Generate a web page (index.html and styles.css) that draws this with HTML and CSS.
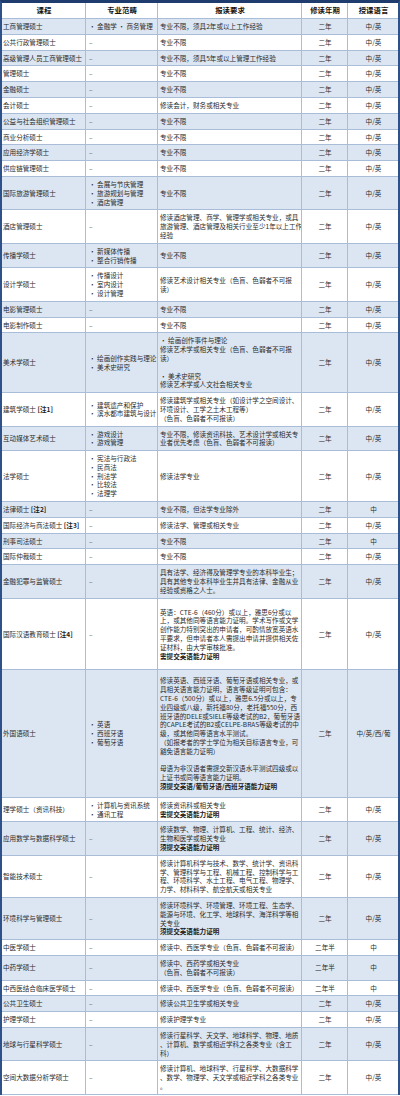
FILE: index.html
```html
<!DOCTYPE html>
<html lang="zh-CN">
<head>
<meta charset="utf-8">
<title>硕士课程</title>
<link rel="stylesheet" href="styles.css">
</head>
<body>
<table class="programs">
  <colgroup>
    <col class="c-name"><col class="c-field"><col class="c-req"><col class="c-year"><col class="c-lang">
  </colgroup>
  <thead>
    <tr><th>课程</th><th>专业范畴</th><th>报读要求</th><th>修读年期</th><th>授课语言</th></tr>
  </thead>
  <tbody>
    <tr class="alt"><td>工商管理硕士</td><td>· 金融学 · 商务管理</td><td>专业不限，须具2年或以上工作经验</td><td>二年</td><td>中/英</td></tr>
    <tr><td>公共行政管理硕士</td><td class="dash">–</td><td>专业不限</td><td>二年</td><td>中/英</td></tr>
    <tr class="alt"><td>高级管理人员工商管理硕士</td><td class="dash">–</td><td>专业不限，须具5年或以上管理工作经验</td><td>二年</td><td>中/英</td></tr>
    <tr><td>管理硕士</td><td class="dash">–</td><td>专业不限</td><td>二年</td><td>中/英</td></tr>
    <tr class="alt"><td>金融硕士</td><td class="dash">–</td><td>专业不限</td><td>二年</td><td>中/英</td></tr>
    <tr><td>会计硕士</td><td class="dash">–</td><td>修读会计，财务或相关专业</td><td>二年</td><td>中/英</td></tr>
    <tr class="alt"><td>公益与社会组织管理硕士</td><td class="dash">–</td><td>专业不限</td><td>二年</td><td>中/英</td></tr>
    <tr><td>商业分析硕士</td><td class="dash">–</td><td>专业不限</td><td>二年</td><td>中/英</td></tr>
    <tr class="alt"><td>应用经济学硕士</td><td class="dash">–</td><td>专业不限</td><td>二年</td><td>中/英</td></tr>
    <tr><td>供应链管理硕士</td><td class="dash">–</td><td>专业不限</td><td>二年</td><td>中/英</td></tr>
    <tr class="alt"><td>国际旅游管理硕士</td><td>· 会展与节庆管理<br>· 旅游规划与管理<br>· 酒店管理</td><td>专业不限</td><td>二年</td><td>中/英</td></tr>
    <tr><td>酒店管理硕士</td><td class="dash">–</td><td>修读酒店管理、商学、管理学或相关专业，或具<br>旅游管理、酒店管理及相关行业至少1年以上工作<br>经验</td><td>二年</td><td>中/英</td></tr>
    <tr class="alt"><td>传播学硕士</td><td>· 新媒体传播<br>· 整合行销传播</td><td>专业不限</td><td>二年</td><td>中/英</td></tr>
    <tr><td>设计学硕士</td><td>· 传播设计<br>· 室内设计<br>· 设计管理</td><td>修读艺术设计相关专业（色盲、色弱者不可报<br>读）</td><td>二年</td><td>中/英</td></tr>
    <tr class="alt"><td>电影管理硕士</td><td class="dash">–</td><td>专业不限</td><td>二年</td><td>中/英</td></tr>
    <tr><td>电影制作硕士</td><td class="dash">–</td><td>专业不限</td><td>二年</td><td>中/英</td></tr>
    <tr class="alt"><td>美术学硕士</td><td>· 绘画创作实践与理论<br>· 美术史研究</td><td>· 绘画创作事件与理论<br>修读艺术学或相关专业（色盲、色弱者不可报<br>读）<br><br>· 美术史研究<br>修读艺术学或人文社会相关专业</td><td>二年</td><td>中/英</td></tr>
    <tr><td>建筑学硕士 <b>[注1]</b></td><td>· 建筑遗产和保护<br>· 滨水都市建筑与设计</td><td>修读建筑学或相关专业（如设计学之空间设计、<br>环境设计、工学之土木工程等）<br>（色盲、色弱者不可报读）</td><td>二年</td><td>中/英</td></tr>
    <tr class="alt"><td>互动媒体艺术硕士</td><td>· 游戏设计<br>· 游戏管理</td><td>专业不限，修读资讯科技、艺术设计学或相关专<br>业者优先考虑（色盲、色弱者不可报读）</td><td>二年</td><td>中/英</td></tr>
    <tr><td>法学硕士</td><td>· 宪法与行政法<br>· 民商法<br>· 刑法学<br>· 比较法<br>· 法理学</td><td>修读法学专业</td><td>二年</td><td>中/英</td></tr>
    <tr class="alt"><td>法律硕士 <b>[注2]</b></td><td class="dash">–</td><td>专业不限，但法学专业除外</td><td>二年</td><td>中</td></tr>
    <tr><td>国际经济与商法硕士 <b>[注3]</b></td><td class="dash">–</td><td>修读法学、管理或相关专业</td><td>二年</td><td>中/英</td></tr>
    <tr class="alt"><td>刑事司法硕士</td><td class="dash">–</td><td>专业不限</td><td>二年</td><td>中</td></tr>
    <tr><td>国际仲裁硕士</td><td class="dash">–</td><td>专业不限</td><td>二年</td><td>中/英</td></tr>
    <tr class="alt"><td>金融犯罪与监管硕士</td><td class="dash">–</td><td>具有法学、经济得及管理学专业的本科毕业生；<br>具有其他专业本科毕业生并具有法律、金融从业<br>经验或资格之人士。</td><td>二年</td><td>中/英</td></tr>
    <tr class="roomy"><td>国际汉语教育硕士 <b>[注4]</b></td><td class="dash">–</td><td>英语：CTE-6（460分）或以上，雅思6分或以<br>上，或其他同等语言能力证明。学术写作或文学<br>创作能力特别突出的申请者，可酌情放宽英语水<br>平要求，但申请者本人需提出申请并提供相关佐<br>证材料，由大学审核批准。<br><b>需提交英语能力证明</b></td><td>二年</td><td>中/英</td></tr>
    <tr class="alt loose"><td>外国语硕士</td><td>· 英语<br>· 西班牙语<br>· 葡萄牙语</td><td>修读英语、西班牙语、葡萄牙语或相关专业，或<br>具相关语言能力证明，语言等级证明可包含：<br>CTE-6（500分）或以上，雅思6.5分或以上，专<br>业四级或八级，新托福80分，老托福550分，西<br>班牙语的DELE或SIELE等级考试的B2，葡萄牙语<br>的CAPLE考试的B2或CELPE-BRAS等级考试的中<br>级，或其他同等语言水平测试。<br>（如报考者的学士学位为相关目标语言专业，可<br>豁免语言能力证明）<br><br>母语为非汉语者需提交新汉语水平测试四级或以<br>上证书或同等语言能力证明。<br><b>须提交英语/葡萄牙语/西班牙语能力证明</b></td><td>二年</td><td>中/英/西/葡</td></tr>
    <tr><td>理学硕士（资讯科技）</td><td>· 计算机与资讯系统<br>· 通讯工程</td><td>修读资讯科或相关专业<br><b>需提交英语能力证明</b></td><td>二年</td><td>中/英</td></tr>
    <tr class="alt"><td>应用数学与数据科学硕士</td><td class="dash">–</td><td>修读数学、物理、计算机、工程、统计、经济、<br>生物和医学或相关专业<br><b>须提交英语能力证明</b></td><td>二年</td><td>中/英</td></tr>
    <tr><td>智能技术硕士</td><td class="dash">–</td><td>修读计算机科学与技术、数学、统计学、资讯科<br>学、管理科学与工程、机械工程、控制科学与工<br>程、环境科学、水土工程、电气工程、物理学、<br>力学、材料科学、航空航天或相关专业</td><td>二年</td><td>中/英</td></tr>
    <tr class="alt"><td>环境科学与管理硕士</td><td class="dash">–</td><td>修读环境科学、环境管理、环境工程、生态学、<br>能源与环境、化工学、地球科学、海洋科学等相<br>关专业<br><b>须提交英语能力证明</b></td><td>二年</td><td>中/英</td></tr>
    <tr><td>中医学硕士</td><td class="dash">–</td><td>修读中、西医学专业（色盲、色弱者不可报读）</td><td>二年半</td><td>中</td></tr>
    <tr class="alt"><td>中药学硕士</td><td class="dash">–</td><td>修读中、西药学或相关专业<br>（色盲、色弱者不可报读）</td><td>二年半</td><td>中</td></tr>
    <tr><td>中西医结合临床医学硕士</td><td class="dash">–</td><td>修读中、西医学专业（色盲、色弱者不可报读）</td><td>二年半</td><td>中</td></tr>
    <tr class="alt"><td>公共卫生硕士</td><td class="dash">–</td><td>修读公共卫生学或相关专业</td><td>二年</td><td>中/英</td></tr>
    <tr><td>护理学硕士</td><td class="dash">–</td><td>修读护理学专业</td><td>二年</td><td>中/英</td></tr>
    <tr class="alt"><td>地球与行星科学硕士</td><td class="dash">–</td><td>修读行星科学、天文学、地球科学、物理、地质<br>、计算机、数学或相近学科之各类专业（含工<br>科）</td><td>二年</td><td>中/英</td></tr>
    <tr><td>空间大数据分析学硕士</td><td class="dash">–</td><td>修读计算机、地球科学、行星科学、大数据科学<br>、数学、物理学、天文学或相近学科之各类专业<br>。</td><td>二年</td><td>中/英</td></tr>
  </tbody>
</table>
</body>
</html>
```

FILE: styles.css
```css
html, body {
  margin: 0;
  padding: 0;
  background: #ffffff;
}

body {
  width: 400px;
  overflow: hidden;
  font-family: "Noto Sans CJK SC", "Noto Sans", sans-serif;
  color: #2b2b2b;
}

.programs {
  width: 400px;
  table-layout: fixed;
  border-collapse: separate;
  border-spacing: 0;
  border: 2px solid #2f5189;
  border-top: 3px solid #1f3c6e;
  border-bottom: none;
  font-size: 6.6px;
  line-height: 8.8px;
}

.c-name { width: 84px; }
.c-field { width: 72px; }
.c-req { width: 144px; }
.c-year { width: 46px; }
.c-lang { width: 50px; }

.programs th,
.programs td {
  border-right: 1px solid #a9bcd8;
  border-bottom: 1px solid #a9bcd8;
  padding: 3px 1px 3px 2px;
  vertical-align: middle;
  white-space: nowrap;
  overflow: hidden;
}

.programs th:last-child,
.programs td:last-child {
  border-right: none;
}

.programs th {
  font-size: 7.4px;
  font-weight: 700;
  color: #111;
  text-align: center;
  height: 9px;
}

.programs td:nth-child(1) {
  padding-left: 1px;
}

.programs td:nth-child(2) {
  padding-left: 3px;
}

.programs td:nth-child(4),
.programs td:nth-child(5) {
  text-align: center;
}

.programs td.dash {
  color: #555;
}

.programs b {
  font-weight: 700;
  color: #1a1a1a;
}

.programs tr.alt td {
  background: #dce6f2;
}

.programs tr.loose td {
  padding-top: 6px;
  padding-bottom: 6px;
}

.programs tr.roomy td {
  padding-top: 9px;
  padding-bottom: 9px;
}
```
